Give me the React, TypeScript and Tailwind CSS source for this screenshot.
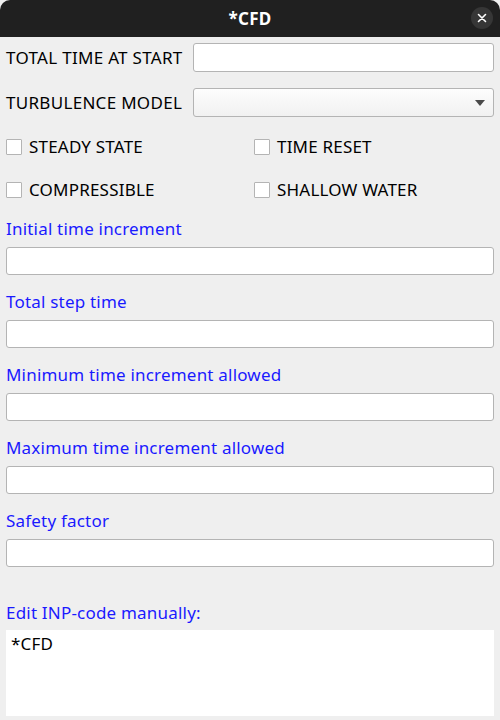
import React from "react";

const font = { fontFamily: '"Noto Sans", "Open Sans", sans-serif' };

function Field({ label }: { label: string }) {
  return (
    <div className="flex flex-col">
      <div className="h-[19px] whitespace-nowrap text-[17px] leading-[17px] tracking-[0.2px] text-[#1a1aff]">{label}</div>
      <div className="mt-[8px] h-[28px] rounded-[3px] border border-[#b4b4b4] bg-white" />
    </div>
  );
}

function Check({ label }: { label: string }) {
  return (
    <div className="flex h-[19px] items-center gap-[7px]">
      <div className="h-[16px] w-[16px] rounded-[1px] border border-[#b4b4b4] bg-white" />
      <span className="whitespace-nowrap text-[17px] leading-[17px] tracking-[0.2px] text-black">{label}</span>
    </div>
  );
}

export default function App() {
  return (
    <div className="flex h-[720px] w-[500px] flex-col overflow-hidden bg-[#efefef]" style={font}>
      <div className="relative flex h-[37px] shrink-0 items-center justify-center rounded-t-[10px] bg-[#202020]">
        <span className="text-[17px] font-bold tracking-[0.3px] text-white">*CFD</span>
        <div className="absolute right-[7px] top-[7px] flex h-[22px] w-[22px] items-center justify-center rounded-full bg-[#363636]">
          <svg width="10" height="10" viewBox="0 0 10 10">
            <path d="M1.5 1.5 L8.5 8.5 M8.5 1.5 L1.5 8.5" stroke="#ffffff" strokeWidth="1.6" strokeLinecap="round" />
          </svg>
        </div>
      </div>
      <div className="flex flex-1 flex-col px-[6px]">
        <div className="mt-[6px] flex h-[29px] items-center">
          <span className="w-[187px] whitespace-nowrap text-[17px] leading-[17px] tracking-[0.3px] text-black">TOTAL TIME AT START</span>
          <div className="h-[29px] flex-1 rounded-[3px] border border-[#b4b4b4] bg-white" />
        </div>
        <div className="mt-[16px] flex h-[29px] items-center">
          <span className="w-[187px] whitespace-nowrap text-[17px] leading-[17px] tracking-[0.3px] text-black">TURBULENCE MODEL</span>
          <div className="flex h-[29px] flex-1 items-center justify-end rounded-[3px] border border-[#b4b4b4] bg-gradient-to-b from-[#fdfdfd] to-[#f1f1f1] pr-[8px]">
            <svg width="10" height="6" viewBox="0 0 10 6">
              <path d="M0 0 L10 0 L5 6 Z" fill="#4a4a4a" />
            </svg>
          </div>
        </div>
        <div className="mt-[20px] grid grid-cols-[248px_1fr] gap-y-[24px]">
          <Check label="STEADY STATE" />
          <Check label="TIME RESET" />
          <Check label="COMPRESSIBLE" />
          <Check label="SHALLOW WATER" />
        </div>
        <div className="mt-[21px] flex flex-col gap-[18px]">
          <Field label="Initial time increment" />
          <Field label="Total step time" />
          <Field label="Minimum time increment allowed" />
          <Field label="Maximum time increment allowed" />
          <Field label="Safety factor" />
        </div>
        <div className="mt-[37px] h-[19px] whitespace-nowrap text-[17px] leading-[17px] tracking-[0.2px] text-[#1a1aff]">Edit INP-code manually:</div>
        <div className="mt-[7px] h-[86px] bg-white px-[5px] pt-[4px] text-[17px] leading-[19px] tracking-[0.2px] text-black">*CFD</div>
      </div>
    </div>
  );
}
